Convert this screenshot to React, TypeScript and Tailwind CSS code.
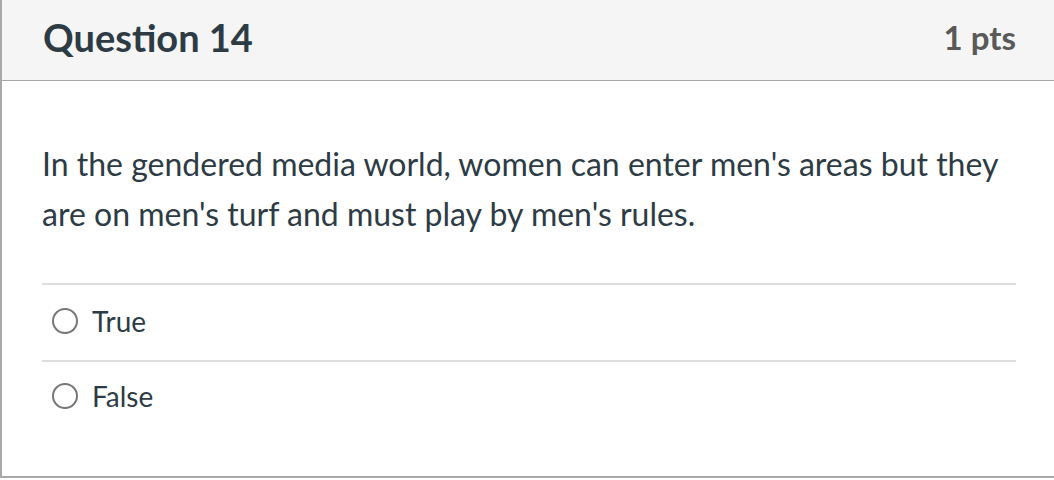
import React from "react";

function Radio() {
  return (
    <span className="inline-block w-[26px] h-[26px] rounded-full border-2 border-[#777] bg-white shrink-0" />
  );
}

export default function App() {
  return (
    <div className="w-[1054px] h-[480px] bg-white" style={{ fontFamily: "Lato, 'Open Sans', sans-serif" }}>
      <div className="h-[478px] border-l-2 border-b-2 border-[#a9a9a9] flex flex-col">
        <div className="h-[81px] bg-[#f5f5f5] border-b border-[#a9a9a9] flex items-center justify-between pl-[41px] pr-[38px] pb-[5px] shrink-0">
          <div className="text-[38px] font-bold text-[#2d3b45]">Question 14</div>
          <div className="text-[33px] font-bold text-[#595959]">1 pts</div>
        </div>
        <div className="pl-[40px] pr-[38px] pt-[58px]">
          <p className="text-[32px] leading-[50px] text-[#2d3b45]">
            In the gendered media world, women can enter men's areas but they are on men's turf and must play by men's rules.
          </p>
          <div className="mt-[44px] border-t-2 border-[#dddddd]">
            <div className="h-[75px] flex items-center gap-[14px] pl-[10px] pb-[4px]">
              <Radio />
              <span className="text-[28px] text-[#2d3b45]">True</span>
            </div>
            <div className="border-t-2 border-[#dddddd] h-[73px] flex items-center gap-[14px] pl-[10px] pb-[4px]">
              <Radio />
              <span className="text-[28px] text-[#2d3b45]">False</span>
            </div>
          </div>
        </div>
      </div>
    </div>
  );
}
